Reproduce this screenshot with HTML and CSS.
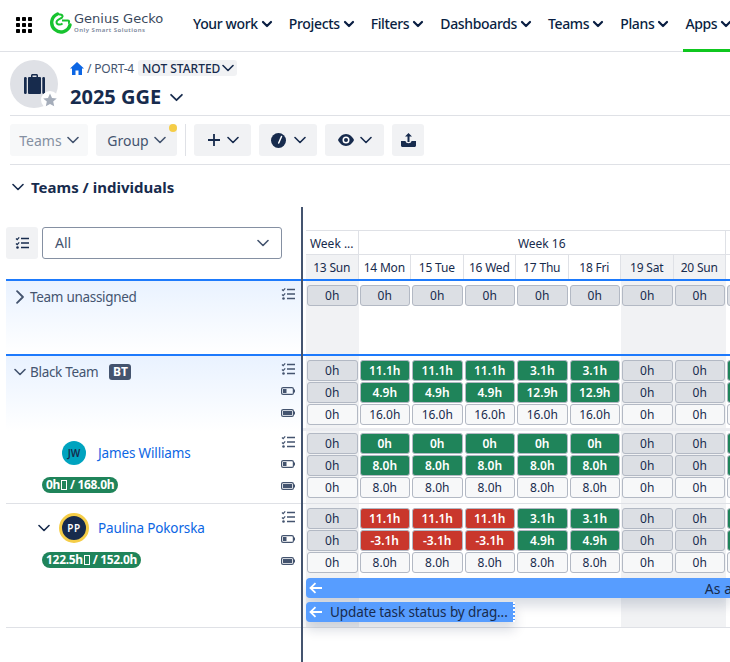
FILE: index.html
```html
<!DOCTYPE html>
<html lang="en">
<head>
    <meta charset="UTF-8">
    <meta name="viewport" content="width=device-width, initial-scale=1.0">
    <title>2025 GGE</title>
    <link rel="stylesheet" href="styles.css">
</head>
<body>
    <svg class="sprite" xmlns="http://www.w3.org/2000/svg">
        <symbol id="chev" viewBox="0 0 12 12"><path d="M1 3.500l5 5 5-5" fill="none" stroke="currentColor" stroke-width="1.600" stroke-linecap="round" stroke-linejoin="round"/></symbol>
        <symbol id="chev-bold" viewBox="0 0 12 12"><path d="M2 4l4 4 4-4" fill="none" stroke="currentColor" stroke-width="2.200" stroke-linecap="round" stroke-linejoin="round"/></symbol>
        <symbol id="checks" viewBox="0 0 14 14"><path d="M1 2.500l1.200 1.200L4.200 1.300M1 7.500l1.200 1.200L4.200 6.300" fill="none" stroke="currentColor" stroke-width="1.200"/><path d="M6 2.500h8M6 7h8M6 11.500h8" stroke="currentColor" stroke-width="1.500"/><circle cx="2.500" cy="11.500" r="1.300" fill="currentColor"/></symbol>
        <symbol id="batt-low" viewBox="0 0 14 8"><rect x=".6" y=".6" width="11.800" height="6.800" rx="1.500" fill="none" stroke="currentColor" stroke-width="1.200"/><rect x="2" y="2" width="3.500" height="4" fill="currentColor"/><rect x="13" y="2.500" width="1" height="3" fill="currentColor"/></symbol>
        <symbol id="batt-full" viewBox="0 0 14 8"><rect x=".6" y=".6" width="11.800" height="6.800" rx="1.500" fill="none" stroke="currentColor" stroke-width="1.200"/><rect x="2" y="2" width="9" height="4" fill="currentColor"/><rect x="13" y="2.500" width="1" height="3" fill="currentColor"/></symbol>
        <symbol id="arrow" viewBox="0 0 14 12"><path d="M13 6H2M6.500 1.200L1.500 6l5 4.800" fill="none" stroke="#fff" stroke-width="1.800"/></symbol>
    </svg>

    <header class="topnav">
        <svg class="waffle" width="16" height="16" viewBox="0 0 16 16" fill="#000">
            <rect width="4" height="4" rx=".8"/><rect x="6" width="4" height="4" rx=".8"/><rect x="12" width="4" height="4" rx=".8"/>
            <rect y="6" width="4" height="4" rx=".8"/><rect x="6" y="6" width="4" height="4" rx=".8"/><rect x="12" y="6" width="4" height="4" rx=".8"/>
            <rect y="12" width="4" height="4" rx=".8"/><rect x="6" y="12" width="4" height="4" rx=".8"/><rect x="12" y="12" width="4" height="4" rx=".8"/>
        </svg>
        <div class="logo">
            <svg width="24" height="22" viewBox="0 0 24 22"><path d="M9.500 2A9.300 9.300 0 1 0 22 13" fill="none" stroke="#17c32f" stroke-width="3.400" stroke-linecap="round"/><path d="M11 2.500c3-.5 4.500 1.500 3 3S8.500 7.500 8.500 10s3.500 3.500 6 1.500M14 8.500h6c1.500 0 1.500 2.500 0 2.500" fill="none" stroke="#17c32f" stroke-width="2"/></svg>
            <div class="logo-text">
                <div class="logo-name">Genius Gecko</div>
                <div class="logo-tag">Only Smart Solutions</div>
            </div>
        </div>
        <nav class="menu">
            <a class="menu-item">Your work <svg width="12" height="12"><use href="#chev-bold"/></svg></a>
            <a class="menu-item">Projects <svg width="12" height="12"><use href="#chev-bold"/></svg></a>
            <a class="menu-item">Filters <svg width="12" height="12"><use href="#chev-bold"/></svg></a>
            <a class="menu-item">Dashboards <svg width="12" height="12"><use href="#chev-bold"/></svg></a>
            <a class="menu-item">Teams <svg width="12" height="12"><use href="#chev-bold"/></svg></a>
            <a class="menu-item">Plans <svg width="12" height="12"><use href="#chev-bold"/></svg></a>
            <a class="menu-item active">Apps <svg width="12" height="12"><use href="#chev-bold"/></svg></a>
        </nav>
    </header>

    <section class="project">
        <div class="project-avatar">
            <svg width="21" height="20" viewBox="0 0 21 20" fill="#172b4d"><path d="M7 3V1.500C7 .7 7.700 0 8.500 0h4c.8 0 1.500.7 1.500 1.500V3h-1.500V1.500h-4V3z"/><rect x="4" y="3" width="13" height="17" rx="1"/><rect width="2.700" height="17" y="3" rx="1.200"/><rect x="18.300" width="2.700" height="17" y="3" rx="1.200"/></svg>
            <span class="project-star"><svg width="14" height="14" viewBox="0 0 14 14" fill="#a5adba"><path d="M7 .5l2 4.400 4.800.5-3.600 3.200 1 4.700L7 10.900l-4.200 2.400 1-4.700L.2 5.400 5 4.900z"/></svg></span>
        </div>
        <div class="project-info">
            <div class="crumbs">
                <svg width="14" height="13" viewBox="0 0 14 13" fill="#0c66e4"><path d="M7 0L0 6.500h2V13h3.500V8.500h3V13H12V6.500h2z"/></svg>
                <span class="crumb-text">/ PORT-4</span>
                <span class="status">NOT STARTED <svg width="12" height="12"><use href="#chev"/></svg></span>
            </div>
            <h1 class="project-title">2025 GGE <svg width="13" height="13"><use href="#chev"/></svg></h1>
        </div>
    </section>

    <section class="toolbar">
        <button class="tool tool-off">Teams <svg width="12" height="12"><use href="#chev"/></svg></button>
        <button class="tool tool-text">Group <svg width="12" height="12"><use href="#chev"/></svg><span class="dot"></span></button>
        <span class="tool-sep"></span>
        <button class="tool tool-add">
            <svg width="14" height="14" viewBox="0 0 14 14"><path d="M7 1v12M1 7h12" stroke="#172b4d" stroke-width="1.800"/></svg>
            <svg width="12" height="12"><use href="#chev"/></svg>
        </button>
        <button class="tool tool-gauge">
            <svg width="15" height="15" viewBox="0 0 15 15"><circle cx="7.500" cy="7.500" r="7.500" fill="#172b4d"/><path d="M10.500 3.500L7.700 10" stroke="#fff" stroke-width="1.500" stroke-linecap="round"/></svg>
            <svg width="12" height="12"><use href="#chev"/></svg>
        </button>
        <button class="tool tool-eye">
            <svg width="16" height="12" viewBox="0 0 16 12"><path d="M8 0c3.600 0 6.500 2.800 8 6-1.500 3.200-4.400 6-8 6s-6.500-2.800-8-6c1.500-3.200 4.400-6 8-6z" fill="#172b4d"/><circle cx="8" cy="6" r="3.500" fill="#fff"/><circle cx="8" cy="6" r="2" fill="#172b4d"/></svg>
            <svg width="12" height="12"><use href="#chev"/></svg>
        </button>
        <button class="tool tool-share">
            <svg width="15" height="14" viewBox="0 0 15 14" fill="#172b4d"><path d="M7.500 0l3.500 3.600H8.500V9h-2V3.600H4z"/><path d="M0 8h4.500c.2 1.300 1.300 2.300 3 2.300s2.800-1 3-2.300H15v4.500c0 .8-.7 1.500-1.500 1.500h-12C.7 14 0 13.300 0 12.500z"/></svg>
        </button>
    </section>

    <h2 class="section-head"><svg width="12" height="12"><use href="#chev"/></svg> Teams / individuals</h2>

    <main class="board">
        <aside class="side">
            <div class="side-filter">
                <button class="filter-btn"><svg width="14" height="14"><use href="#checks"/></svg></button>
                <div class="select"><span class="select-value">All</span> <svg width="12" height="12"><use href="#chev"/></svg></div>
            </div>

            <div class="side-row row-unassigned team-bg">
                <div class="row-main">
                    <div class="team-name"><svg class="chev-right" width="14" height="14"><use href="#chev"/></svg> Team unassigned</div>
                </div>
                <div class="row-icons">
                    <svg width="14" height="14"><use href="#checks"/></svg>
                </div>
            </div>

            <div class="side-row row-black team-bg">
                <div class="row-main">
                    <div class="team-name"><svg width="12" height="12"><use href="#chev"/></svg> Black Team <span class="team-badge">BT</span></div>
                </div>
                <div class="row-icons">
                    <svg width="14" height="14"><use href="#checks"/></svg>
                    <svg width="14" height="8"><use href="#batt-low"/></svg>
                    <svg width="14" height="8"><use href="#batt-full"/></svg>
                </div>
            </div>

            <div class="side-row row-james">
                <div class="row-main">
                    <div class="person person-james">
                        <span class="avatar avatar-jw">JW</span>
                        <span class="person-name">James Williams</span>
                    </div>
                    <div class="hours">0h<i class="tofu"></i> / 168.0h</div>
                </div>
                <div class="row-icons">
                    <svg width="14" height="14"><use href="#checks"/></svg>
                    <svg width="14" height="8"><use href="#batt-low"/></svg>
                    <svg width="14" height="8"><use href="#batt-full"/></svg>
                </div>
            </div>

            <div class="side-row row-paulina">
                <div class="row-main">
                    <div class="person person-paulina">
                        <svg width="12" height="12"><use href="#chev"/></svg>
                        <span class="avatar avatar-pp">PP</span>
                        <span class="person-name">Paulina Pokorska</span>
                    </div>
                    <div class="hours">122.5h<i class="tofu"></i> / 152.0h</div>
                </div>
                <div class="row-icons">
                    <svg width="14" height="14"><use href="#checks"/></svg>
                    <svg width="14" height="8"><use href="#batt-low"/></svg>
                    <svg width="14" height="8"><use href="#batt-full"/></svg>
                </div>
            </div>
        </aside>

        <div class="timeline">
            <div class="weeks">
                <div class="week week-one">Week ...</div>
                <div class="week week-five">Week 16</div>
                <div class="week week-one"></div>
            </div>
            <div class="dates">
                <div class="date off">13 Sun</div><div class="date">14 Mon</div><div class="date">15 Tue</div><div class="date">16 Wed</div><div class="date">17 Thu</div><div class="date">18 Fri</div><div class="date off">19 Sat</div><div class="date off">20 Sun</div><div class="date"></div>
            </div>

            <div class="t-row row-unassigned">
                <div class="day off"><b class="cell">0h</b></div>
                <div class="day"><b class="cell">0h</b></div>
                <div class="day"><b class="cell">0h</b></div>
                <div class="day"><b class="cell">0h</b></div>
                <div class="day"><b class="cell">0h</b></div>
                <div class="day"><b class="cell">0h</b></div>
                <div class="day off"><b class="cell">0h</b></div>
                <div class="day off"><b class="cell">0h</b></div>
                <div class="day"><b class="cell"></b></div>
            </div>

            <div class="t-row row-black">
                <div class="day off"><b class="cell">0h</b><b class="cell">0h</b><b class="cell free">0h</b></div>
                <div class="day"><b class="cell ok">11.1h</b><b class="cell ok">4.9h</b><b class="cell free">16.0h</b></div>
                <div class="day"><b class="cell ok">11.1h</b><b class="cell ok">4.9h</b><b class="cell free">16.0h</b></div>
                <div class="day"><b class="cell ok">11.1h</b><b class="cell ok">4.9h</b><b class="cell free">16.0h</b></div>
                <div class="day"><b class="cell ok">3.1h</b><b class="cell ok">12.9h</b><b class="cell free">16.0h</b></div>
                <div class="day"><b class="cell ok">3.1h</b><b class="cell ok">12.9h</b><b class="cell free">16.0h</b></div>
                <div class="day off"><b class="cell">0h</b><b class="cell">0h</b><b class="cell free">0h</b></div>
                <div class="day off"><b class="cell">0h</b><b class="cell">0h</b><b class="cell free">0h</b></div>
                <div class="day"><b class="cell ok"></b><b class="cell ok"></b><b class="cell free"></b></div>
            </div>

            <div class="t-row row-james">
                <div class="day off"><b class="cell">0h</b><b class="cell">0h</b><b class="cell free">0h</b></div>
                <div class="day"><b class="cell ok">0h</b><b class="cell ok">8.0h</b><b class="cell free">8.0h</b></div>
                <div class="day"><b class="cell ok">0h</b><b class="cell ok">8.0h</b><b class="cell free">8.0h</b></div>
                <div class="day"><b class="cell ok">0h</b><b class="cell ok">8.0h</b><b class="cell free">8.0h</b></div>
                <div class="day"><b class="cell ok">0h</b><b class="cell ok">8.0h</b><b class="cell free">8.0h</b></div>
                <div class="day"><b class="cell ok">0h</b><b class="cell ok">8.0h</b><b class="cell free">8.0h</b></div>
                <div class="day off"><b class="cell">0h</b><b class="cell">0h</b><b class="cell free">0h</b></div>
                <div class="day off"><b class="cell">0h</b><b class="cell">0h</b><b class="cell free">0h</b></div>
                <div class="day"><b class="cell ok"></b><b class="cell ok"></b><b class="cell free"></b></div>
            </div>

            <div class="t-row row-paulina">
                <div class="day off"><b class="cell">0h</b><b class="cell">0h</b><b class="cell free">0h</b></div>
                <div class="day"><b class="cell over">11.1h</b><b class="cell over">-3.1h</b><b class="cell free">8.0h</b></div>
                <div class="day"><b class="cell over">11.1h</b><b class="cell over">-3.1h</b><b class="cell free">8.0h</b></div>
                <div class="day"><b class="cell over">11.1h</b><b class="cell over">-3.1h</b><b class="cell free">8.0h</b></div>
                <div class="day"><b class="cell ok">3.1h</b><b class="cell ok">4.9h</b><b class="cell free">8.0h</b></div>
                <div class="day"><b class="cell ok">3.1h</b><b class="cell ok">4.9h</b><b class="cell free">8.0h</b></div>
                <div class="day off"><b class="cell">0h</b><b class="cell">0h</b><b class="cell free">0h</b></div>
                <div class="day off"><b class="cell">0h</b><b class="cell">0h</b><b class="cell free">0h</b></div>
                <div class="day"><b class="cell ok"></b><b class="cell ok"></b><b class="cell free"></b></div>

                <div class="task task-long">
                    <svg width="14" height="12"><use href="#arrow"/></svg>
                    <span class="task-title">As a</span>
                </div>
                <div class="task task-short">
                    <svg width="14" height="12"><use href="#arrow"/></svg>
                    <span>Update task status by drag...</span>
                </div>
            </div>
        </div>
    </main>
</body>
</html>
```

FILE: styles.css
```css
* {
    box-sizing: border-box;
}
html, body {
    height: 662px;
    overflow: hidden;
}
body {
    margin: 0;
    background-color: #fff;
    color: #172b4d;
    font-family: "Noto Sans", "Open Sans", sans-serif;
    font-size: 14px;
}
svg {
    flex-shrink: 0;
}
.sprite {
    display: none;
}

/* top navigation */
.topnav {
    display: flex;
    align-items: center;
    height: 52px;
    padding-left: 16px;
    border-bottom: 1px solid #dfe1e6;
}
.waffle {
    margin-top: -2px;
}
.logo {
    display: flex;
    flex-shrink: 0;
    align-items: center;
    gap: 2px;
    width: 145px;
    margin: -5px 0 0 16px;
}
.logo-name {
    color: #3b4a5e;
    font-family: "DejaVu Sans", sans-serif;
    font-size: 13px;
    font-weight: 500;
    line-height: 14px;
    white-space: nowrap;
}
.logo-tag {
    color: #7a8699;
    font-size: 6px;
    font-weight: 600;
    letter-spacing: .5px;
    line-height: 8px;
    white-space: nowrap;
}
.menu {
    display: flex;
    flex-shrink: 0;
    align-self: stretch;
    gap: 16px;
}
.menu-item {
    display: flex;
    align-items: center;
    gap: 3px;
    padding-bottom: 4px;
    color: #091e42;
    font-weight: 500;
    letter-spacing: -.35px;
    white-space: nowrap;
}
.menu-item.active {
    margin: 0 0 -1px -2px;
    padding: 0 2px 2px;
    border-bottom: 3px solid #0fc71f;
}

/* project header */
.project {
    display: flex;
    height: 64px;
    margin-left: 10px;
    padding-top: 8px;
    border-bottom: 1px solid #dfe1e6;
}
.project-avatar {
    position: relative;
    display: flex;
    align-items: center;
    justify-content: center;
    width: 48px;
    height: 48px;
    border-radius: 50%;
    background-color: #dfe1e6;
}
.project-star {
    position: absolute;
    right: -1px;
    bottom: -1px;
    display: flex;
    align-items: center;
    justify-content: center;
    width: 18px;
    height: 18px;
    border-radius: 50%;
    background-color: #fff;
}
.project-info {
    margin-left: 12px;
}
.crumbs {
    display: flex;
    align-items: center;
    gap: 3px;
    height: 16px;
    font-size: 12px;
}
.crumb-text {
    color: #44546f;
    letter-spacing: -.2px;
}
.status {
    display: flex;
    align-items: center;
    gap: 2px;
    height: 16px;
    margin-left: 1px;
    padding: 0 3px 0 4px;
    border-radius: 3px;
    background-color: #f1f2f4;
    font-weight: 500;
}
.project-title {
    display: flex;
    align-items: center;
    gap: 9px;
    margin: 7px 0 0;
    font-size: 20px;
    font-weight: 700;
    line-height: 28px;
}

/* toolbar */
.toolbar {
    display: flex;
    align-items: center;
    height: 49px;
    margin-left: 10px;
    border-bottom: 1px solid #dfe1e6;
}
.tool {
    position: relative;
    display: flex;
    align-items: center;
    justify-content: center;
    gap: 5px;
    height: 32px;
    margin-right: 8px;
    padding: 0;
    border: none;
    border-radius: 3px;
    background-color: #f1f2f4;
    color: #172b4d;
    font-family: inherit;
    font-size: 14px;
}
.tool-off {
    width: 78px;
    background-color: #f7f8f9;
    color: #8590a2;
}
.tool-off svg {
    color: #44546f;
}
.tool-text {
    width: 81px;
    color: #44546f;
}
.tool-add {
    width: 57px;
    gap: 6px;
}
.tool-gauge {
    width: 58px;
    gap: 8px;
}
.tool-eye {
    width: 59px;
    gap: 6px;
}
.tool-share {
    width: 32px;
}
.dot {
    position: absolute;
    top: 0;
    right: 0;
    width: 8px;
    height: 8px;
    border-radius: 50%;
    background-color: #f5cd47;
}
.tool-sep {
    width: 1px;
    height: 32px;
    margin-right: 8px;
    background-color: #dfe1e6;
}

.section-head {
    display: flex;
    align-items: center;
    gap: 7px;
    height: 42px;
    margin: 0;
    padding: 2px 0 0 12px;
    font-size: 15px;
    font-weight: 700;
}

/* board */
.board {
    display: flex;
    height: 455px;
    margin-left: 6px;
}
.side {
    flex: 0 0 297px;
    border-right: 2px solid #44546f;
}
.side-filter {
    display: flex;
    gap: 4px;
    height: 72px;
    padding-top: 20px;
}
.filter-btn {
    display: flex;
    align-items: center;
    justify-content: center;
    width: 32px;
    height: 32px;
    padding: 0;
    border: none;
    border-radius: 3px;
    background-color: #f1f2f4;
    color: #172b4d;
}
.select {
    display: flex;
    align-items: center;
    justify-content: space-between;
    width: 240px;
    height: 32px;
    padding: 0 12px;
    border: 1px solid #8590a2;
    border-radius: 3px;
    color: #44546f;
}
.select-value {
    margin-top: -2px;
}
.side-row {
    display: flex;
}
.team-bg {
    border-top: 2px solid #1d7afc;
    background: linear-gradient(#e9f2ff, #fff);
}
.row-unassigned {
    height: 75px;
}
.row-black {
    height: 77px;
}
.row-james {
    height: 73px;
    border-bottom: 1px solid #dfe1e6;
}
.row-paulina {
    height: 124px;
    border-bottom: 1px solid #dfe1e6;
}
.row-main {
    flex: 1;
}
.row-icons {
    display: flex;
    flex-direction: column;
    align-items: center;
    width: 20px;
    margin-right: 3px;
    padding-top: 2px;
    color: #44546f;
}
.row-icons svg {
    height: 22px;
}
.side-row.row-james .row-icons {
    padding-top: 0;
}
.team-name {
    display: flex;
    align-items: center;
    gap: 4px;
    margin-top: 6px;
    padding-left: 8px;
    color: #44546f;
    font-size: 13.5px;
    letter-spacing: -.3px;
    line-height: 20px;
}
.chev-right {
    margin: 0 -1px;
    transform: rotate(-90deg);
}
.team-badge {
    margin-left: 7px;
    padding: 0 3.5px;
    border-radius: 3px;
    background-color: #44546f;
    color: #fff;
    font-size: 12px;
    font-weight: 700;
    letter-spacing: 0;
    line-height: 16px;
}
.person {
    display: flex;
    align-items: center;
    height: 30px;
}
.person-james {
    margin-top: 7px;
    padding-left: 56px;
    gap: 12px;
}
.person-paulina {
    margin-top: 9px;
    padding-left: 32px;
    gap: 9px;
}
.person-name {
    color: #0c66e4;
    font-size: 13.5px;
    letter-spacing: -.15px;
}
.avatar {
    display: flex;
    align-items: center;
    justify-content: center;
    border-radius: 50%;
    font-size: 10px;
    font-weight: 600;
}
.avatar-jw {
    width: 24px;
    height: 24px;
    background-color: #00a3bf;
}
.avatar-pp {
    width: 30px;
    height: 30px;
    border: 3px solid #f5cd47;
    background-color: #172b4d;
    color: #fff;
    letter-spacing: .5px;
}
.hours {
    width: fit-content;
    height: 16px;
    margin: 9px 0 0 36px;
    padding: 0 4px;
    border-radius: 8px;
    background-color: #1f845a;
    color: #fff;
    font-size: 12px;
    font-weight: 700;
    letter-spacing: -.3px;
    line-height: 16px;
}
.tofu {
    display: inline-block;
    width: 6px;
    height: 10px;
    margin-left: 1px;
    border: 1px solid #fff;
    vertical-align: -1px;
}

/* timeline */
.timeline {
    flex: 1;
    min-width: 0;
    overflow: hidden;
}
.weeks {
    display: flex;
    height: 24px;
    margin: 23px 0 0 3px;
    border-top: 1px solid #dfe1e6;
}
.week {
    flex-shrink: 0;
    border-right: 1px solid #dfe1e6;
    font-size: 12px;
    line-height: 25px;
    text-align: center;
}
.week-one {
    width: 52.5px;
}
.week-five {
    width: 367.5px;
}
.dates {
    display: flex;
    height: 25px;
    margin-left: 3px;
    border-top: 1px solid #dfe1e6;
}
.date {
    flex: 0 0 52.5px;
    border-right: 1px solid #dfe1e6;
    font-size: 12px;
    letter-spacing: -.2px;
    line-height: 25px;
    text-align: center;
}
.date.off,
.day.off {
    background-color: #f1f2f4;
}
.t-row {
    position: relative;
    display: flex;
    padding-left: 3px;
}
.t-row.row-unassigned {
    border-top: 2px solid #1d7afc;
}
.t-row.row-black {
    border-top: 2px solid #1d7afc;
    border-bottom: 3px solid #ebecf0;
}
.day {
    display: flex;
    flex: 0 0 52.5px;
    flex-direction: column;
    gap: 1px;
    padding: 4px 1px 0;
}
.row-james .day {
    padding-top: 2px;
}
.cell {
    display: block;
    height: 21px;
    border: 1px solid #b3b9c4;
    border-radius: 3px;
    background-color: #dcdfe4;
    color: #172b4d;
    font-size: 12px;
    font-weight: 400;
    line-height: 19px;
    text-align: center;
}
.cell.free {
    background-color: #f7f8f9;
}
.cell.ok {
    background-color: #1f845a;
    color: #fff;
    font-weight: 600;
}
.cell.over {
    background-color: #c9372c;
    color: #fff;
    font-weight: 600;
}
.task {
    position: absolute;
    left: 3px;
    display: flex;
    align-items: center;
    height: 20px;
    padding-left: 3px;
    border-radius: 4px 0 0 4px;
    background-color: #579dff;
    box-shadow: 0 8px 12px rgba(9, 30, 66, 0.15);
    white-space: nowrap;
}
.task-long {
    top: 74px;
    right: 0;
}
.task-title {
    margin-left: auto;
    margin-right: -2px;
}
.task-short {
    top: 98px;
    width: 209px;
    gap: 7px;
    border-right: 2px dotted #fff;
    font-size: 13.5px;
    letter-spacing: -.1px;
}
```
